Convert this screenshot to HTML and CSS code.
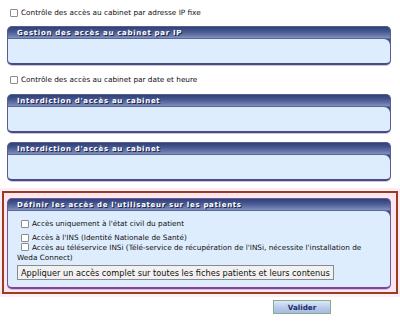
FILE: index.html
```html
<!DOCTYPE html>
<html lang="fr">
<head>
<meta charset="utf-8">
<title>Accès</title>
<link rel="stylesheet" href="styles.css">
</head>
<body>
<div class="page">
  <label class="chk top"><input type="checkbox">Contrôle des accès au cabinet par adresse IP fixe</label>
  <div class="panel first">
    <div class="phead">Gestion des accès au cabinet par IP</div>
    <div class="pbody"></div>
  </div>
  <label class="chk top second"><input type="checkbox">Contrôle des accès au cabinet par date et heure</label>
  <div class="panel p2">
    <div class="phead">Interdiction d'accès au cabinet</div>
    <div class="pbody"></div>
  </div>
  <div class="panel p3">
    <div class="phead">Interdiction d'accès au cabinet</div>
    <div class="pbody"></div>
  </div>
  <div class="highlight">
    <div class="panel rights">
      <div class="phead">Définir les accès de l'utilisateur sur les patients</div>
      <div class="pbody rbody">
        <label class="chk row r1"><input type="checkbox">Accès uniquement à l'état civil du patient</label>
        <label class="chk row r2"><input type="checkbox">Accès à l'INS (Identité Nationale de Santé)</label>
        <label class="chk row r3"><input type="checkbox">Accès au téléservice INSi (Télé-service de récupération de l'INSi, nécessite l'installation de Weda Connect)</label>
        <button class="apply" type="button">Appliquer un accès complet sur toutes les fiches patients et leurs contenus</button>
      </div>
    </div>
  </div>
  <div class="actions"><button class="valider" type="button">Valider</button></div>
</div>
</body>
</html>
```
FILE: styles.css
```css
html, body {
  margin: 0;
  padding: 0;
  background: #ffffff;
}
.page {
  width: 400px;
  font-family: "DejaVu Sans", Verdana, sans-serif;
  font-size: 7.3px;
  color: #111;
}
.chk {
  display: flex;
  align-items: center;
  line-height: 12px;
}
.chk input {
  appearance: none;
  -webkit-appearance: none;
  width: 8px;
  height: 8px;
  margin: 0 3px 0 0;
  border: 1px solid #8c8c8c;
  border-radius: 1px;
  background: #fff;
  flex: none;
}
.chk.top {
  margin-top: 7px;
  padding-left: 10px;
}
.chk.top.second {
  margin-top: 9px;
}
.panel {
  margin-left: 7px;
  width: 382px;
  border: 1px solid #55608f;
  border-bottom: 2px solid #4a4a86;
  border-radius: 5px;
  background: #3f5088;
  overflow: hidden;
  box-shadow: 0 1px 0 #c8c8dc;
}
.panel.first { margin-top: 7px; }
.panel.p2 { margin-top: 8px; }
.panel.p3 { margin-top: 9px; }
.phead {
  height: 12px;
  line-height: 12px;
  padding-left: 9px;
  background: linear-gradient(to bottom, #2f4078 0%, #44568d 35%, #6c7cae 75%, #8391bd 90%, #3a4a80 100%);
  color: #fff;
  font-weight: bold;
  font-size: 7px;
  letter-spacing: 0.7px;
  text-shadow: 1px 1px 0 #1b2248;
  white-space: nowrap;
}
.pbody {
  height: 24px;
  background: #deedfd;
  border-top-right-radius: 6px;
}
.highlight {
  margin-top: 10px;
  margin-left: 2px;
  width: 388px;
  border: 2px solid #9a3c24;
  background: #fde6ee;
  box-shadow: 0 0 0 3px #fdeef4;
  padding: 5px 1px 3px 3px;
}
.panel.rights {
  margin-left: 0;
  border-color: #6a5a9a;
  border-bottom-color: #8a3e9e;
}
.rbody {
  height: auto;
  padding: 8px 0 7px 9px;
}
.chk.row {
  line-height: 10px;
  padding-left: 4px;
}
.chk.row.r1 { margin-bottom: 4px; }
.chk.row.r3 {
  display: block;
  padding-left: 0;
  padding-right: 16px;
}
.chk.row.r3 input {
  display: inline-block;
  vertical-align: -1px;
  margin-left: 4px;
}
.apply {
  display: block;
  margin-top: 2px;
  height: 15px;
  padding: 0 3px;
  font-family: "DejaVu Sans", Verdana, sans-serif;
  font-size: 8.2px;
  color: #111;
  background: #f1f1f1;
  border: 1px solid #8a8a8a;
  border-radius: 0;
  white-space: nowrap;
}
.actions {
  margin-top: 6px;
  padding-left: 273px;
}
.valider {
  width: 58px;
  height: 14px;
  padding: 0;
  font-family: "DejaVu Sans", Verdana, sans-serif;
  font-size: 7.2px;
  font-weight: bold;
  color: #1b2a6b;
  background: linear-gradient(to bottom, #dce8f8, #b6c8ea 60%, #a6bbe2);
  border: 1px solid #8ea98c;
}
```
